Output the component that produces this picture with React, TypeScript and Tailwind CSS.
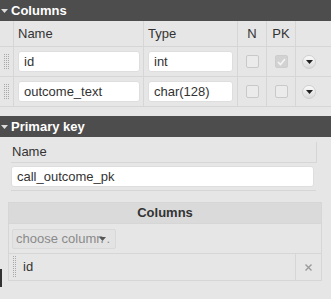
import React from "react";

const Tri = ({ color = "#dcdcdc" }: { color?: string }) => (
  <svg width="7" height="4" viewBox="0 0 7 4">
    <polygon points="0,0 7,0 3.5,4" fill={color} />
  </svg>
);

const Dots = ({ cols, rows }: { cols: number; rows: number }) => {
  const items: React.ReactNode[] = [];
  for (let c = 0; c < cols; c++)
    for (let r = 0; r < rows; r++)
      items.push(<rect key={`${c}-${r}`} x={c * 2} y={r * 2} width="1" height="1" fill="#a8a8a8" />);
  return (
    <svg width={cols * 2} height={rows * 2} viewBox={`0 0 ${cols * 2} ${rows * 2}`}>
      {items}
    </svg>
  );
};

const Check = ({ checked }: { checked?: boolean }) => (
  <div
    className={`w-[13px] h-[13px] rounded-[2px] border flex items-center justify-center ${
      checked ? "bg-[#d2d2d2] border-[#cdcdcd]" : "bg-[#ebebeb] border-[#c9c9c9]"
    }`}
  >
    {checked && (
      <svg width="9" height="8" viewBox="0 0 9 8">
        <polyline points="1,4 3.5,6.5 8,1" fill="none" stroke="#f4f4f4" strokeWidth="1.6" />
      </svg>
    )}
  </div>
);

const Drop = () => (
  <div className="w-[14px] h-[14px] rounded-full border border-[#cfcfcf] bg-linear-to-b from-[#fbfbfb] to-[#dadada] flex items-center justify-center">
    <svg width="7" height="4" viewBox="0 0 7 4" className="mt-[1px]">
      <polygon points="0,0 7,0 3.5,4" fill="#222" />
    </svg>
  </div>
);

const SectionHeader = ({ title }: { title: string }) => (
  <div className="h-[21px] bg-[#4d4d4d] flex items-center pl-[1px] gap-[3px]">
    <Tri />
    <span className="text-white font-bold text-[13px] leading-none">{title}</span>
  </div>
);

const cell = "border-b border-[#d6d6d6]";
const cellL = "border-b border-l border-[#d6d6d6]";

const Row = ({ name, type, pk }: { name: string; type: string; pk?: boolean }) => (
  <>
    <div className={`${cell} h-[30px] flex items-center pl-[4px]`}>
      <Dots cols={3} rows={8} />
    </div>
    <div className={`${cellL} h-[30px] flex items-center pl-[4px]`}>
      <div className="w-[122px] h-[21px] bg-white border border-[#dedede] rounded-[3px] flex items-center pl-[5px] text-[13px] text-[#333]">
        {name}
      </div>
    </div>
    <div className={`${cellL} h-[30px] flex items-center pl-[4px]`}>
      <div className="w-[85px] h-[21px] bg-white border border-[#dedede] rounded-[3px] flex items-center pl-[5px] text-[13px] text-[#333]">
        {type}
      </div>
    </div>
    <div className={`${cellL} h-[30px] flex items-center justify-center`}>
      <Check />
    </div>
    <div className={`${cellL} h-[30px] flex items-center justify-center`}>
      <Check checked={pk} />
    </div>
    <div className={`${cellL} h-[30px] flex items-center pl-[6px]`}>
      <Drop />
    </div>
  </>
);

export default function App() {
  return (
    <div
      className="relative w-[331px] h-[299px] bg-[#e6e6e6] overflow-hidden text-[#333]"
      style={{ fontFamily: '"Liberation Sans", Arial, sans-serif' }}
    >
      <SectionHeader title="Columns" />
      <div className="pb-[9px]">
        <div className="grid grid-cols-[13px_130px_94px_29px_29px_36px]">
          <div className={`${cell} h-[26px]`} />
          <div className={`${cellL} h-[26px] flex items-center pl-[4px] text-[13px]`}>Name</div>
          <div className={`${cellL} h-[26px] flex items-center pl-[4px] text-[13px]`}>Type</div>
          <div className={`${cellL} h-[26px] flex items-center justify-center text-[13px]`}>N</div>
          <div className={`${cellL} h-[26px] flex items-center justify-center text-[13px]`}>PK</div>
          <div className={`${cellL} h-[26px]`} />
          <Row name="id" type="int" pk />
          <Row name="outcome_text" type="char(128)" />
        </div>
      </div>
      <SectionHeader title="Primary key" />
      <div className="pt-[5px] pl-[11px]">
        <div className="w-[306px] h-[21px] border-b border-r border-[#d6d6d6] flex items-center pl-[1px] text-[13px]">
          Name
        </div>
        <div className="w-[305px] h-[28px] border-b border-[#d6d6d6] pt-[3px]">
          <div className="w-[303px] h-[21px] bg-white border border-[#dedede] rounded-[3px] flex items-center pl-[5px] text-[13px]">
            call_outcome_pk
          </div>
        </div>
      </div>
      <div className="ml-[8px] mt-[11px] w-[314px] border border-[#d6d6d6]">
        <div className="h-[20px] bg-[#dadada] flex items-center justify-center font-bold text-[13px]">Columns</div>
        <div className="h-[30px] border-t border-[#d6d6d6] flex items-center pl-[3px]">
          <div className="relative w-[104px] h-[20px] bg-[#e3e3e3] border border-[#d9d9d9] rounded-[2px] flex items-center pl-[3px] text-[13px] text-[#8a8a8a] overflow-hidden whitespace-nowrap">
            <span>choose column</span>
            <span className="inline-flex items-center ml-[-4px] bg-[#e3e3e3]">
              <svg width="7" height="4" viewBox="0 0 7 4">
                <polygon points="0,0 7,0 3.5,4" fill="#555" />
              </svg>
            </span>
            <span>.</span>
          </div>
        </div>
        <div className="h-[27px] border-t border-[#d6d6d6] flex">
          <div className="flex-1 flex items-center pl-[4px]">
            <Dots cols={2} rows={11} />
            <span className="ml-[6px] text-[13px]">id</span>
          </div>
          <div className="w-[26px] border-l border-[#d6d6d6] flex items-center justify-center">
            <svg width="7" height="7" viewBox="0 0 7 7">
              <path d="M0.5 0.5 L6.5 6.5 M6.5 0.5 L0.5 6.5" stroke="#9a9a9a" strokeWidth="1.4" />
            </svg>
          </div>
        </div>
      </div>
      <div className="absolute left-0 top-[269px] w-[2px] h-[18px] bg-[#333]" />
    </div>
  );
}
